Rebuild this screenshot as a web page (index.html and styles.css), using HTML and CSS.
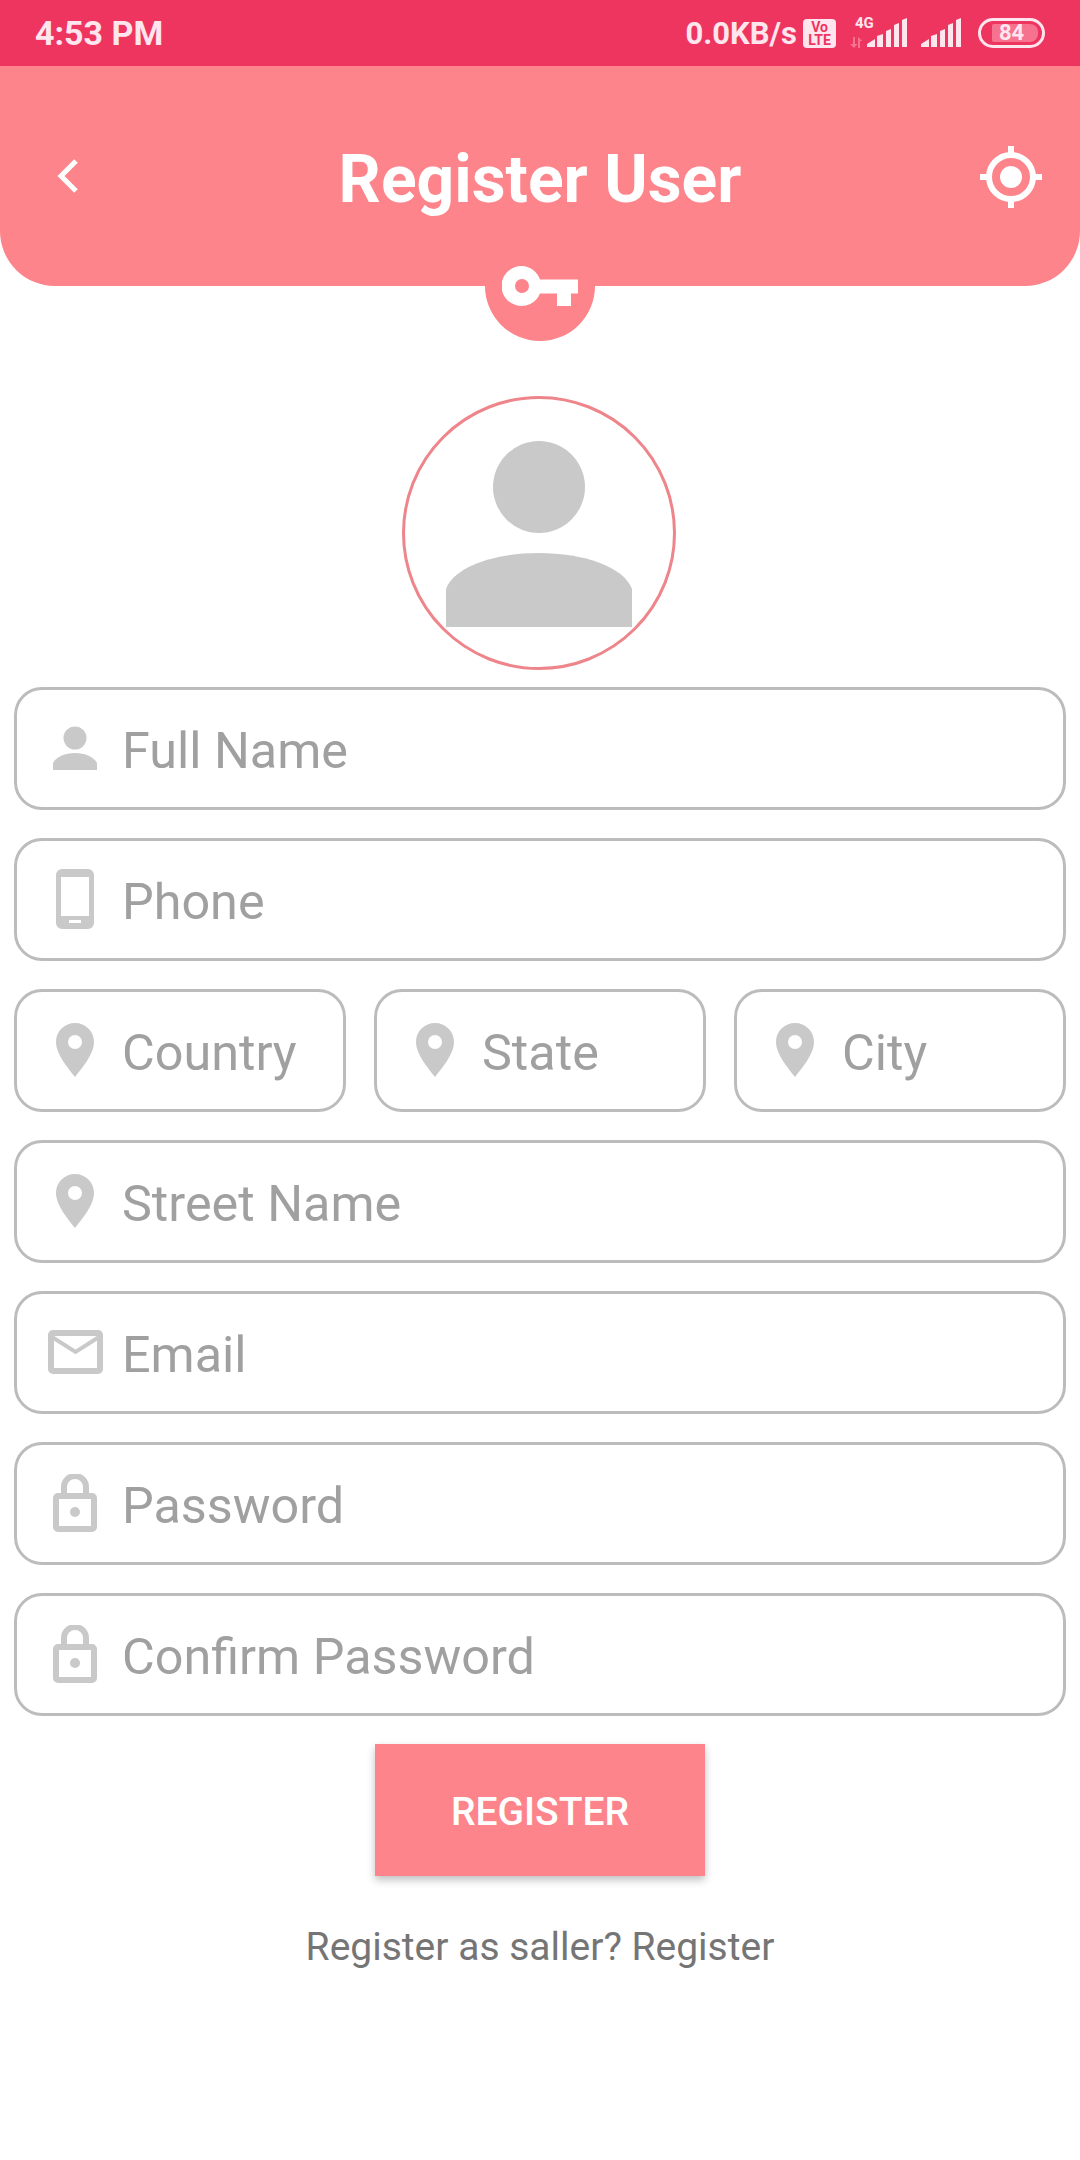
FILE: index.html
```html
<!DOCTYPE html>
<html lang="en">
<head>
  <meta charset="UTF-8">
  <title>Register User</title>
  <link rel="stylesheet" href="styles.css">
</head>
<body>

  <!-- Status bar -->
  <div class="status-bar">
    <span class="status-time">4:53 PM</span>
    <div class="status-right">
      <span class="status-speed">0.0KB/s</span>
      <span class="volte"><span>Vo</span><span>LTE</span></span>
      <span class="net">
        <span class="net-label">4G</span>
        <svg class="net-arrows" width="13" height="11" viewBox="0 0 13 11"><path d="M3 0h2v7h2.500L4 11 0 7h3zM8 11V0l4.500 4H10v7z" fill="#f7728f"/></svg>
      </span>
      <svg class="signal" width="40" height="30" viewBox="0 0 40 30"><use href="#bars"/></svg>
      <svg class="signal signal-2" width="40" height="30" viewBox="0 0 40 30"><use href="#bars"/></svg>
      <span class="battery"><span class="battery-level"></span><span class="battery-num">84</span></span>
    </div>
  </div>

  <!-- Header -->
  <header class="header">
    <svg class="back" width="22" height="36" viewBox="0 0 22 36"><path d="M19 3 4 18l15 15" fill="none" stroke="#fff" stroke-width="5"/></svg>
    <h1>Register User</h1>
    <svg class="locate" width="62" height="62" viewBox="0 0 62 62">
      <circle cx="31" cy="31" r="22" fill="none" stroke="#fff" stroke-width="6"/>
      <circle cx="31" cy="31" r="11" fill="#fff"/>
      <path d="M28 0h6v8h-6zM28 54h6v8h-6zM0 28h8v6H0zM54 28h8v6h-8z" fill="#fff"/>
    </svg>
    <div class="key-badge">
      <svg width="76" height="42" viewBox="0 0 76 42">
        <path fill-rule="evenodd" d="M20 1a20 20 0 0 1 18 13.500h38v14H69V41H55V28.500H38A20 20 0 1 1 20 1zm0 13a7 7 0 1 0 0 14 7 7 0 0 0 0-14z" fill="#fff"/>
      </svg>
    </div>
  </header>

  <!-- Avatar -->
  <div class="avatar">
    <svg width="186" height="186" viewBox="0 0 186 186">
      <circle cx="93" cy="46" r="46" fill="#c9c9c9"/>
      <path d="M0 186v-38c8-22 48-36 93-36s85 14 93 36v38z" fill="#c9c9c9"/>
    </svg>
  </div>

  <!-- Form -->
  <form class="form">
    <label class="field">
      <span class="ico">
        <svg width="46" height="44" viewBox="0 0 46 44"><circle cx="23" cy="12" r="11.500" fill="#c9c9c9"/><path d="M1 44v-7c3-6 12-10 22-10s19 4 22 10v7z" fill="#c9c9c9"/></svg>
      </span>
      <span class="ph">Full Name</span>
    </label>
    <label class="field">
      <span class="ico">
        <svg width="38" height="60" viewBox="0 0 38 60"><path fill-rule="evenodd" d="M6 0h26a6 6 0 0 1 6 6v48a6 6 0 0 1-6 6H6a6 6 0 0 1-6-6V6a6 6 0 0 1 6-6zm-1 8v39h28V8zm8 43v3h12v-3z" fill="#c9c9c9"/></svg>
      </span>
      <span class="ph">Phone</span>
    </label>
    <div class="field-row">
      <label class="field">
        <span class="ico">
          <svg width="38" height="54" viewBox="0 0 38 54"><use href="#pin"/></svg>
        </span>
        <span class="ph">Country</span>
      </label>
      <label class="field">
        <span class="ico">
          <svg width="38" height="54" viewBox="0 0 38 54"><use href="#pin"/></svg>
        </span>
        <span class="ph">State</span>
      </label>
      <label class="field">
        <span class="ico">
          <svg width="38" height="54" viewBox="0 0 38 54"><use href="#pin"/></svg>
        </span>
        <span class="ph">City</span>
      </label>
    </div>
    <label class="field">
      <span class="ico">
        <svg width="38" height="54" viewBox="0 0 38 54"><use href="#pin"/></svg>
      </span>
      <span class="ph">Street Name</span>
    </label>
    <label class="field">
      <span class="ico">
        <svg width="55" height="44" viewBox="0 0 55 44"><rect x="3" y="3" width="49" height="38" rx="2" fill="none" stroke="#c9c9c9" stroke-width="6"/><path d="m4 7 23.500 15L51 7" fill="none" stroke="#c9c9c9" stroke-width="4"/></svg>
      </span>
      <span class="ph">Email</span>
    </label>
    <label class="field">
      <span class="ico">
        <svg width="44" height="58" viewBox="0 0 44 58"><use href="#lock"/></svg>
      </span>
      <span class="ph">Password</span>
    </label>
    <label class="field">
      <span class="ico">
        <svg width="44" height="58" viewBox="0 0 44 58"><use href="#lock"/></svg>
      </span>
      <span class="ph">Confirm Password</span>
    </label>
    <button type="button" class="btn">REGISTER</button>
    <p class="seller">Register as saller? Register</p>
  </form>

  <!-- Shared icons -->
  <svg class="defs" width="0" height="0">
    <defs>
      <path id="bars" d="M0 29v-3l8-5v8zM10 29V18l6-2v13zM19 29V13l5-2v18zM27 29V7l5-2v24zM35 29V2l5-2v29z" fill="#ffe6ee"/>
      <path id="pin" fill-rule="evenodd" d="M19 0c10.500 0 19 8.200 19 19 0 12-12 26-19 35C12 45 0 31 0 19 0 8.200 8.500 0 19 0zm0 12a7 7 0 1 0 0 14 7 7 0 0 0 0-14z" fill="#c9c9c9"/>
      <g id="lock">
        <path d="M11 21V13a11 11 0 0 1 22 0v8" fill="none" stroke="#c9c9c9" stroke-width="6"/>
        <rect x="3" y="22" width="38" height="33" rx="2" fill="none" stroke="#c9c9c9" stroke-width="6"/>
        <circle cx="22" cy="38" r="5" fill="#c9c9c9"/>
      </g>
    </defs>
  </svg>

</body>
</html>
```

FILE: styles.css
```css
* {
  box-sizing: border-box;
}

body {
  margin: 0;
  width: 1080px;
  height: 2160px;
  overflow: hidden;
  background: #fff;
  font-family: Roboto, "Liberation Sans", sans-serif;
}

/* Status bar */
.status-bar {
  height: 66px;
  background: #ee3560;
  color: #ffe6ee;
  display: flex;
  align-items: center;
  justify-content: space-between;
  padding: 0 35px;
}

.status-time {
  font-size: 34px;
  font-weight: 700;
}

.status-right {
  display: flex;
  align-items: center;
}

.status-speed {
  font-size: 31px;
  font-weight: 700;
}

.volte {
  width: 33px;
  height: 29px;
  margin-left: 6px;
  background: #ffe6ee;
  border-radius: 4px;
  color: #ee3560;
  display: flex;
  flex-direction: column;
  align-items: center;
  font-size: 14px;
  font-weight: 700;
  line-height: 13px;
  padding-top: 2px;
}

.net {
  width: 17px;
  height: 30px;
  margin-left: 14px;
  position: relative;
}

.net-label {
  position: absolute;
  top: -2px;
  left: 5px;
  font-size: 15px;
  font-weight: 700;
  line-height: 14px;
}

.net-arrows {
  position: absolute;
  left: 0;
  bottom: 0;
}

.signal-2 {
  margin-left: 14px;
}

.battery {
  width: 67px;
  height: 30px;
  margin-left: 17px;
  border: 3px solid #ffe6ee;
  border-radius: 15px;
  position: relative;
  display: flex;
  align-items: center;
  justify-content: center;
}

.battery-level {
  position: absolute;
  left: 11px;
  top: 3px;
  bottom: 3px;
  width: 46px;
  background: #f7728f;
  border-radius: 2px 8px 8px 2px;
}

.battery-num {
  position: relative;
  font-size: 22px;
  font-weight: 700;
  line-height: 24px;
}

/* Header */
.header {
  height: 220px;
  background: #fc848a;
  border-radius: 0 0 55px 55px;
  position: relative;
  display: flex;
  align-items: center;
  justify-content: center;
}

.header h1 {
  margin: 0;
  padding-top: 6px;
  color: #fff;
  font-size: 66px;
  font-weight: 700;
  line-height: 75px;
}

.back {
  position: absolute;
  left: 57px;
  top: 92px;
}

.locate {
  position: absolute;
  left: 980px;
  top: 80px;
}

.key-badge {
  position: absolute;
  left: 485px;
  top: 165px;
  width: 110px;
  height: 110px;
  border-radius: 50%;
  background: #fc848a;
  display: flex;
  align-items: center;
  justify-content: center;
}

/* Avatar */
.avatar {
  width: 274px;
  height: 274px;
  margin: 110px 0 0 402px;
  border: 3px solid #ee858b;
  border-radius: 50%;
  display: flex;
  justify-content: center;
  padding-top: 42px;
}

/* Form */
.form {
  margin-top: 17px;
  padding: 0 14px;
  display: flex;
  flex-direction: column;
  gap: 28px;
}

.field-row {
  display: grid;
  grid-template-columns: repeat(3, 1fr);
  gap: 28px;
}

.field {
  height: 123px;
  border: 3px solid #bcbcbc;
  border-radius: 28px;
  display: flex;
  align-items: center;
}

.ico {
  width: 105px;
  flex: none;
  display: flex;
  justify-content: center;
  padding-left: 11px;
  margin-top: -2px;
}

.ph {
  padding-top: 4px;
  color: #a0a0a0;
  font-size: 50.300px;
  white-space: nowrap;
}

.btn {
  width: 330px;
  height: 132px;
  margin: 0 auto;
  padding-top: 4px;
  border: 0;
  background: #fc848a;
  color: #fff;
  font-family: inherit;
  font-size: 39px;
  font-weight: 500;
  box-shadow: 0 4px 8px rgba(0, 0, 0, 0.25);
}

.seller {
  margin: -9px 0 0;
  padding-top: 30px;
  text-align: center;
  color: #757575;
  font-size: 39px;
  line-height: 45px;
}

.defs {
  position: absolute;
}
```
